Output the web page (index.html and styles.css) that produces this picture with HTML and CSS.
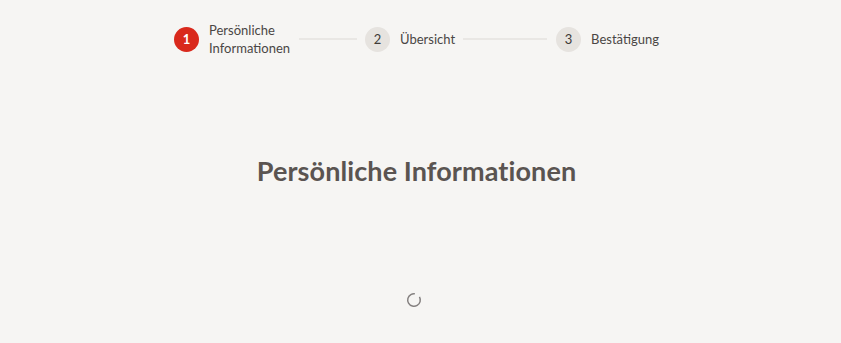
FILE: index.html
```html
<!DOCTYPE html>
<html lang="de">
<head>
<meta charset="utf-8">
<title>Persönliche Informationen</title>
<link rel="stylesheet" href="styles.css">
</head>
<body>
<div class="page">
  <nav class="stepper">
    <div class="step active">
      <span class="num">1</span>
      <span class="label">Persönliche<br>Informationen</span>
    </div>
    <span class="line line-a"></span>
    <div class="step">
      <span class="num">2</span>
      <span class="label">Übersicht</span>
    </div>
    <span class="line line-b"></span>
    <div class="step">
      <span class="num">3</span>
      <span class="label">Bestätigung</span>
    </div>
  </nav>
  <h1 class="title">Persönliche Informationen</h1>
  <div class="loader">
    <svg class="spinner" width="16" height="16" viewBox="0 0 16 16" aria-hidden="true">
      <circle cx="8" cy="8" r="6.3" fill="none" stroke="#858180" stroke-width="1.5" stroke-dasharray="33 6.6" transform="rotate(-30 8 8)"/>
    </svg>
  </div>
</div>
</body>
</html>
```
FILE: styles.css
```css
html, body {
  margin: 0;
  padding: 0;
  background: #f6f5f3;
}
body {
  font-family: Lato, "Open Sans", "Liberation Sans", sans-serif;
  color: #4a4644;
}
.page {
  width: 841px;
  height: 343px;
  display: flex;
  flex-direction: column;
  align-items: center;
}
.stepper {
  display: flex;
  align-items: center;
  margin-top: 21px;
  margin-left: -8px;
  height: 36px;
}
.step {
  display: flex;
  align-items: center;
  gap: 10px;
}
.num {
  width: 25px;
  height: 25px;
  border-radius: 50%;
  background: #e6e3df;
  color: #3f3b39;
  font-size: 13px;
  display: flex;
  align-items: center;
  justify-content: center;
}
.step.active .num {
  background: #d9291c;
  color: #fff;
  font-weight: 700;
}
.label {
  font-size: 13px;
  line-height: 18px;
  color: #4a4644;
}
.line {
  height: 2px;
  background: #e9e7e4;
  margin: 0 8px 0 9px;
}
.line-a { width: 58px; }
.line-b { width: 84px; margin: 0 9px 0 8px; }
.title {
  margin: 97px 0 0 -8px;
  font-size: 27px;
  font-weight: 700;
  color: #5a5451;
  letter-spacing: 0.1px;
}
.loader {
  margin-top: 105px;
  margin-left: -13px;
}
.spinner {
  display: block;
}
```
